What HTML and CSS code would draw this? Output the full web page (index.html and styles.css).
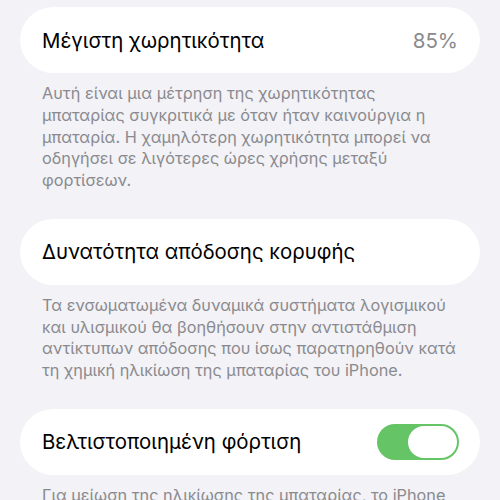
FILE: index.html
```html
<!DOCTYPE html>
<html lang="el">
<head>
<meta charset="utf-8">
<link rel="stylesheet" href="styles.css">
</head>
<body>
<main class="page">
  <section class="group">
    <div class="card">
      <span class="label">Μέγιστη χωρητικότητα</span>
      <span class="value">85%</span>
    </div>
    <p class="note">Αυτή είναι μια μέτρηση της χωρητικότητας μπαταρίας συγκριτικά με όταν ήταν καινούργια η μπαταρία. Η χαμηλότερη χωρητικότητα μπορεί να οδηγήσει σε λιγότερες ώρες χρήσης μεταξύ φορτίσεων.</p>
  </section>
  <section class="group">
    <div class="card">
      <span class="label">Δυνατότητα απόδοσης κορυφής</span>
    </div>
    <p class="note">Τα ενσωματωμένα δυναμικά συστήματα λογισμικού και υλισμικού θα βοηθήσουν στην αντιστάθμιση αντίκτυπων απόδοσης που ίσως παρατηρηθούν κατά τη χημική ηλικίωση της μπαταρίας του iPhone.</p>
  </section>
  <section class="group">
    <div class="card">
      <span class="label">Βελτιστοποιημένη φόρτιση</span>
      <span class="toggle"><span class="knob"></span></span>
    </div>
    <p class="note">Για μείωση της ηλικίωσης της μπαταρίας, το iPhone μαθαίνει από την καθημερινή ρουτίνα φόρτισής σας.</p>
  </section>
</main>
</body>
</html>
```
FILE: styles.css
```css
html, body {
  margin: 0;
  padding: 0;
  background: #f2f2f7;
}
body {
  font-family: "Inter", "Noto Sans", sans-serif;
  overflow: hidden;
  height: 500px;
}
.page {
  padding: 7px 20px 0 20px;
  display: flex;
  flex-direction: column;
  gap: 27px;
}
.card {
  background: #ffffff;
  border-radius: 33px;
  height: 66px;
  display: flex;
  align-items: center;
  justify-content: space-between;
  padding: 0 22px 0 22px;
  box-sizing: border-box;
}
.label {
  font-size: 20.4px;
  color: #000;
}
.value {
  font-size: 20.5px;
  color: #8a8a8e;
}
.note {
  margin: 0;
  padding: 10px 24px 0 22px;
  font-size: 16.3px;
  line-height: 21.75px;
  color: #8a8a8e;
}
.toggle {
  width: 82px;
  height: 36px;
  border-radius: 18px;
  background: #65c466;
  display: flex;
  align-items: center;
  justify-content: flex-end;
  padding: 0 2px;
  box-sizing: border-box;
  margin-right: -1px;
}
.knob {
  width: 49px;
  height: 32px;
  border-radius: 16px;
  background: #fff;
}
```
